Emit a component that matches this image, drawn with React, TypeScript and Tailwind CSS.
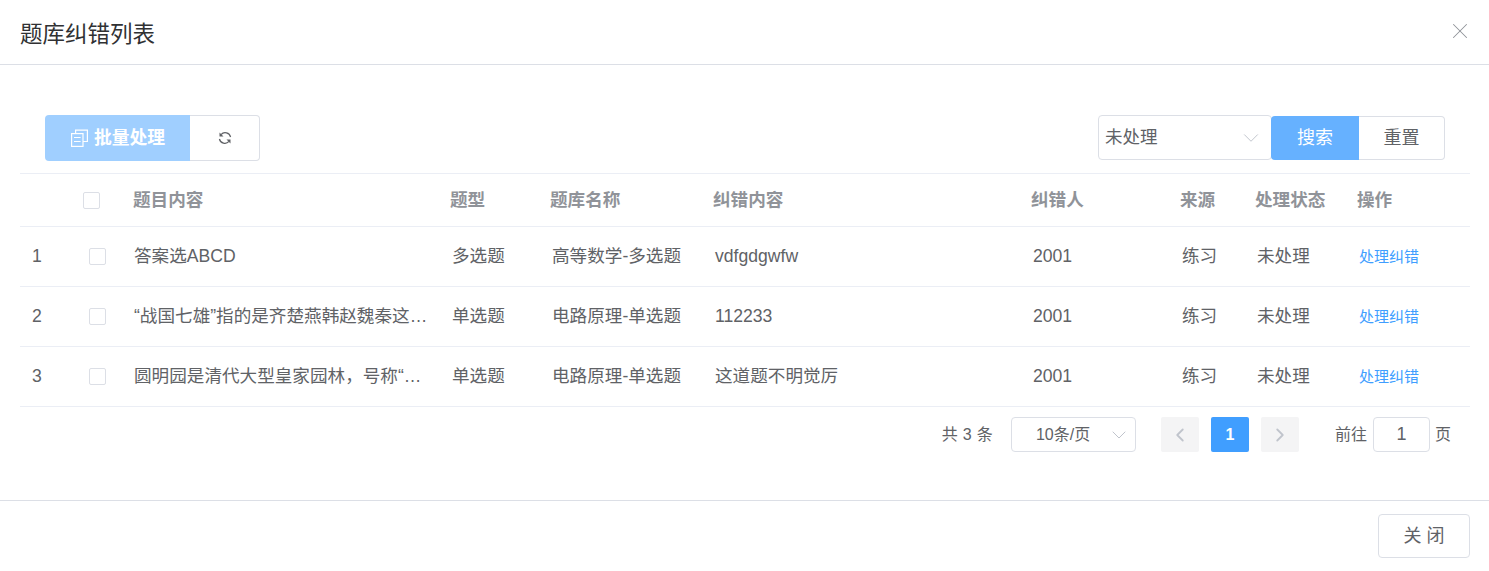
import React from "react";
import { ChevronDown, ChevronLeft, ChevronRight, X } from "lucide-react";

const font = "font-['Liberation_Sans','Noto_Sans_CJK_SC',sans-serif]";

const headers = ["题目内容", "题型", "题库名称", "纠错内容", "纠错人", "来源", "处理状态", "操作"];
const rows = [
  ["1", "答案选ABCD", "多选题", "高等数学-多选题", "vdfgdgwfw"],
  ["2", "“战国七雄”指的是齐楚燕韩赵魏秦这…", "单选题", "电路原理-单选题", "112233"],
  ["3", "圆明园是清代大型皇家园林，号称“…", "单选题", "电路原理-单选题", "这道题不明觉厉"],
];

function Box() {
  return <span className="block w-[17px] h-[17px] rounded-[2px] border border-[#dcdfe6] bg-white" />;
}

function DocIcon() {
  return (
    <svg width="17" height="18" viewBox="0 0 17 18" fill="none" stroke="currentColor" strokeWidth="1.2">
      <path d="M4.6 4.5V1.1H16.4V12.5H12" />
      <rect x="0.6" y="4.6" width="11.4" height="12.8" />
      <path d="M3 8.5H9.6M3 12.5H9.6" />
    </svg>
  );
}

function RefreshIcon() {
  return (
    <svg width="14" height="14" viewBox="0 0 14 14" fill="none" stroke="#606266" strokeWidth="1.2">
      <path d="M3 3.6A5.6 5.6 0 0 1 12.6 6" />
      <path d="M11 10.4A5.6 5.6 0 0 1 1.4 8" />
      <path d="M1.5 1.5L1.5 5.5L5.5 5.5Z" fill="#606266" stroke="none" />
      <path d="M12.5 12.5L12.5 8.5L8.5 8.5Z" fill="#606266" stroke="none" />
    </svg>
  );
}

export default function App() {
  return (
    <div className={`${font} w-[1489px] h-[571px] bg-white flex flex-col overflow-hidden text-[17.6px] text-[#606266]`}>
      <header className="h-[65px] shrink-0 border-b border-[#dcdfe6] flex items-center justify-between pl-5 pr-4">
        <h1 className="text-[22.5px] text-[#303133] font-normal leading-none mt-[7px]">题库纠错列表</h1>
        <X size={26} strokeWidth={0.95} className="text-[#909399] -mt-[3px]" />
      </header>

      <main className="h-[436px] shrink-0 pl-5 pr-[19px] pt-[50px] border-b border-[#dcdfe6]">
        <div className="flex justify-between h-[59px] pl-[25px] pr-[25px] border-b border-[#ebeef5]">
          <div className="flex h-[46px]">
            <button className="w-[145px] h-[46px] bg-[#a0cfff] text-white font-bold text-[17.8px] rounded-l-[4px] flex items-center justify-center gap-[6px] pl-px">
              <DocIcon />
              批量处理
            </button>
            <button className="w-[70px] h-[46px] bg-white border border-l-0 border-[#dcdfe6] rounded-r-[4px] flex items-center justify-center">
              <RefreshIcon />
            </button>
          </div>
          <div className="flex h-[46px]">
            <div className="w-[174px] h-[45px] border border-[#dcdfe6] rounded-[4px] flex items-center justify-between pl-[6px] pr-[7px] text-[17.5px] -mr-px">
              未处理
              <ChevronDown size={26} strokeWidth={0.9} className="text-[#c0c4cc]" />
            </div>
            <button className="relative w-[88px] h-[44px] mt-px bg-[#66b1ff] text-white text-[18px] rounded-l-[4px]">搜索</button>
            <button className="w-[86px] h-[44px] mt-px bg-white border border-l-0 border-[#dcdfe6] rounded-r-[4px] text-[18px]">重置</button>
          </div>
        </div>

        <div className="grid grid-cols-[63px_50px_317px_100px_163px_318px_149px_75px_102px_113px] h-[53px] items-center border-b border-[#ebeef5] font-bold text-[#909399]">
          <span />
          <Box />
          {headers.map((h) => (
            <span key={h}>{h}</span>
          ))}
        </div>

        {rows.map((r) => (
          <div
            key={r[0]}
            className="grid grid-cols-[69px_45px_318px_100px_163px_318px_149px_75px_102px_111px] h-[60px] items-center border-b border-[#ebeef5]"
          >
            <span className="pl-3">{r[0]}</span>
            <Box />
            <span className="whitespace-nowrap">{r[1]}</span>
            <span>{r[2]}</span>
            <span>{r[3]}</span>
            <span>{r[4]}</span>
            <span>2001</span>
            <span>练习</span>
            <span>未处理</span>
            <span className="text-[15px] text-[#409eff] mt-[2px]">处理纠错</span>
          </div>
        ))}

        <div className="flex items-center justify-end h-[35px] mt-[10px] pr-[19px] text-[16px]">
          <span className="mr-[18px] text-[16px] tracking-[0.3px]">共 3 条</span>
          <div className="w-[125px] h-[35px] border border-[#dcdfe6] rounded-[4px] flex items-center justify-between pl-6 pr-[4px] mr-[25px]">
            10条/页
            <ChevronDown size={24} strokeWidth={1} className="text-[#c0c4cc]" />
          </div>
          <span className="w-[38px] h-[35px] rounded-[2px] bg-[#f4f4f5] flex items-center justify-center mr-[12px]">
            <ChevronLeft size={22} strokeWidth={2} className="text-[#c0c4cc]" />
          </span>
          <span className="w-[38px] h-[35px] rounded-[2px] bg-[#409eff] text-white font-bold flex items-center justify-center mr-[12px]">1</span>
          <span className="w-[38px] h-[35px] rounded-[2px] bg-[#f4f4f5] flex items-center justify-center mr-9">
            <ChevronRight size={22} strokeWidth={2} className="text-[#c0c4cc]" />
          </span>
          <span>前往</span>
          <span className="w-[57px] h-[35px] border border-[#dcdfe6] rounded-[4px] flex items-center justify-center ml-[6px] mr-[5px] text-[18px]">1</span>
          <span>页</span>
        </div>
      </main>

      <footer className="flex justify-end pt-[13px] pr-[19px]">
        <button className="w-[92px] h-[44px] border border-[#dcdfe6] rounded-[4px] bg-white text-[18px] tracking-[5px] pl-[5px]">关闭</button>
      </footer>
    </div>
  );
}
